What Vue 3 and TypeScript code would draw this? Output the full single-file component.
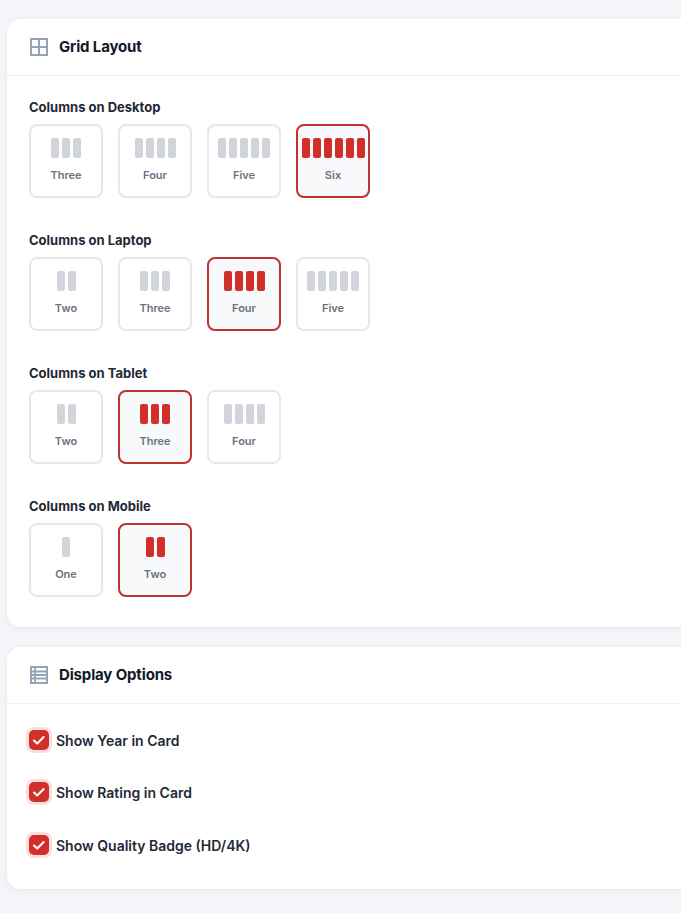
<template>
  <div class="page">
    <section class="card">
      <header class="card-head">
        <svg class="head-icon" width="20" height="20" viewBox="0 0 20 20" fill="none" stroke="#94a3b8" stroke-width="2">
          <rect x="2" y="2" width="16" height="16" />
          <path d="M10 2v16M2 10h16" />
        </svg>
        <h2>Grid Layout</h2>
      </header>
      <div class="card-body grid-body">
        <div v-for="group in groups" :key="group.title" class="group">
          <div class="group-title">{{ group.title }}</div>
          <div class="options">
            <button
              v-for="opt in group.options"
              :key="opt.label"
              class="option"
              :class="{ selected: opt.label === group.selected }"
            >
              <span class="bars">
                <i v-for="n in opt.count" :key="n" class="bar"></i>
              </span>
              <span class="opt-label">{{ opt.label }}</span>
            </button>
          </div>
        </div>
      </div>
    </section>

    <section class="card">
      <header class="card-head">
        <svg class="head-icon" width="20" height="20" viewBox="0 0 20 20" fill="none" stroke="#94a3b8" stroke-width="2">
          <rect x="2" y="2" width="16" height="16" />
          <path d="M2 6.5h16M2 10h16M2 13.5h16M6 2v16" stroke-width="1.8" />
        </svg>
        <h2>Display Options</h2>
      </header>
      <div class="card-body checks">
        <label v-for="item in displayOptions" :key="item" class="check-row">
          <span class="checkbox">
            <svg width="14" height="14" viewBox="0 0 14 14" fill="none" stroke="#fff" stroke-width="2" stroke-linecap="round" stroke-linejoin="round">
              <path d="M2 7.5l3.2 3 6.5-6.5" />
            </svg>
          </span>
          <span class="check-label">{{ item }}</span>
        </label>
      </div>
    </section>
  </div>
</template>

<script setup lang="ts">
interface Option {
  label: string
  count: number
}

const counts: Record<string, number> = { One: 1, Two: 2, Three: 3, Four: 4, Five: 5, Six: 6 }

function opts(...labels: string[]): Option[] {
  return labels.map((label) => ({ label, count: counts[label] }))
}

const groups = [
  { title: 'Columns on Desktop', selected: 'Six', options: opts('Three', 'Four', 'Five', 'Six') },
  { title: 'Columns on Laptop', selected: 'Four', options: opts('Two', 'Three', 'Four', 'Five') },
  { title: 'Columns on Tablet', selected: 'Three', options: opts('Two', 'Three', 'Four') },
  { title: 'Columns on Mobile', selected: 'Two', options: opts('One', 'Two') },
]

const displayOptions = ['Show Year in Card', 'Show Rating in Card', 'Show Quality Badge (HD/4K)']
</script>

<style>
html,
body {
  margin: 0;
  background: #f4f5f9;
  overflow: hidden;
}
</style>

<style scoped>
.page {
  height: 913px;
  box-sizing: border-box;
  padding: 19px 0 0 7px;
  background: #f4f5f9;
  font-family: Inter, "Liberation Sans", sans-serif;
  overflow: hidden;
  display: flex;
  flex-direction: column;
  gap: 20px;
}
.card {
  width: 720px;
  background: #fff;
  border-radius: 14px;
  box-shadow: 0 1px 6px rgba(17, 24, 39, 0.06);
}
.card-head {
  height: 56px;
  display: flex;
  align-items: center;
  gap: 10px;
  padding-left: 22px;
  border-bottom: 1px solid #f1f2f5;
}
.head-icon {
  flex: none;
}
h2 {
  margin: 0 0 2px;
  font-size: 15px;
  font-weight: 700;
  letter-spacing: -0.15px;
  color: #111827;
}
.grid-body {
  padding: 22px 22px 30px;
  display: flex;
  flex-direction: column;
  gap: 33px;
}
.group-title {
  font-size: 13px;
  line-height: 18px;
  font-weight: 700;
  color: #1f2937;
  margin-bottom: 8px;
}
.options {
  display: flex;
  gap: 15px;
}
.option {
  width: 74px;
  height: 74px;
  box-sizing: border-box;
  padding: 12px 0 0;
  border: 2px solid #e5e7eb;
  border-radius: 8px;
  background: #fff;
  display: flex;
  flex-direction: column;
  align-items: center;
  font-family: inherit;
}
.option.selected {
  border-color: #c0312f;
  background: #f8f9fb;
}
.bars {
  display: flex;
  gap: 3px;
  height: 20px;
}
.bar {
  width: 8px;
  height: 20px;
  border-radius: 2px;
  background: #d1d5db;
}
.selected .bar {
  background: #d32f2a;
}
.opt-label {
  margin-top: 9px;
  font-size: 11px;
  line-height: 16px;
  font-weight: 600;
  color: #6b7280;
}
.checks {
  padding: 25.6px 22px 33.8px;
  display: flex;
  flex-direction: column;
  gap: 32.8px;
}
.check-row {
  display: flex;
  align-items: center;
  gap: 7px;
  height: 20px;
}
.checkbox {
  width: 20px;
  height: 20px;
  border-radius: 5px;
  background: #d32f2a;
  box-shadow: 0 0 0 3px rgba(211, 47, 42, 0.16);
  display: flex;
  align-items: center;
  justify-content: center;
}
.check-label {
  margin-top: 1px;
  font-size: 14px;
  font-weight: 600;
  color: #1f2937;
}
</style>
